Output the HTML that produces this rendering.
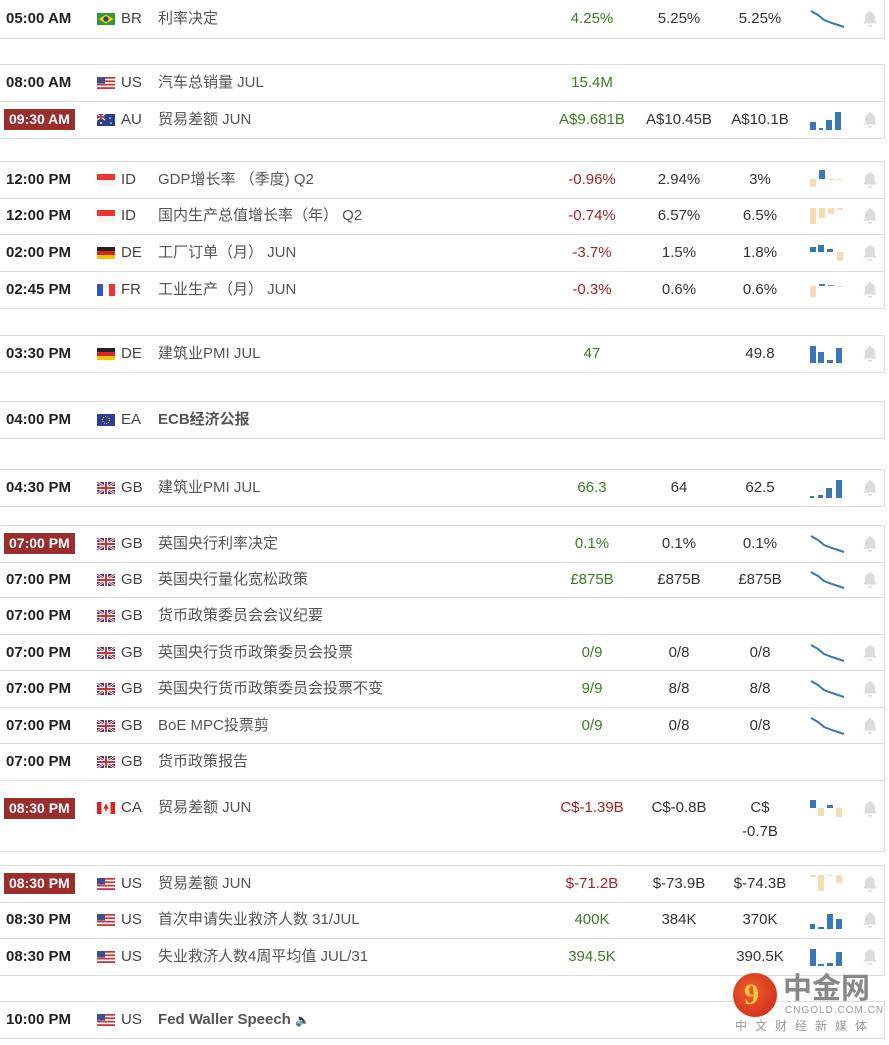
<!DOCTYPE html>
<html><head><meta charset="utf-8"><style>
body{margin:0;background:#fff;width:889px;height:1045px;position:relative;overflow:hidden;font-family:"Liberation Sans","Noto Sans CJK SC",sans-serif;font-size:15px;color:#333}
.r{position:absolute;left:0;width:884px;border-bottom:1px solid #ddd;border-right:1px solid #ddd}
.r>span{position:absolute;top:0;white-space:nowrap}
.r>svg{position:absolute}
.t{left:6px;font-weight:bold;color:#222}
.hl{left:4px;background:#9b2d2d;color:#fff;font-weight:bold;font-size:14px;padding:0 5px;height:21px;line-height:21px!important;top:50%!important;margin-top:-11px}
.fl{left:97px;top:50%;margin-top:-6px;width:18px;height:12px}
.cc{left:121px;color:#444}
.ev{left:158px;color:#555}
.a,.f,.p{width:90px;text-align:center}
.a{left:547px}.f{left:634px}.p{left:715px}
.g{color:#3b7d22}.red{color:#a32424}
.ch{left:810px;top:50%;margin-top:-10px}
.bl{left:861px;top:50%;margin-top:-9px}
.top{border-top:1px solid #ddd}
</style></head><body>
<svg width="0" height="0" style="position:absolute"><defs>
<symbol id="bell" viewBox="0 0 18 18"><path d="M9 1a1.5 1.5 0 0 1 1.5 1.5c2.5.7 3.5 2.8 3.5 5.5v3l2 2.5H2L4 11V8c0-2.7 1-4.8 3.5-5.5A1.5 1.5 0 0 1 9 1zM7 15h4a2 2 0 0 1-4 0z" fill="#dcdcdc"/></symbol>
<symbol id="us" viewBox="0 0 18 12"><rect width="18" height="12" fill="#fff"/><g fill="#c33"><rect y="0" width="18" height="1.7"/><rect y="3.4" width="18" height="1.7"/><rect y="6.8" width="18" height="1.7"/><rect y="10.2" width="18" height="1.8"/></g><rect width="8" height="6.5" fill="#3c4f8f"/></symbol>
<symbol id="gb" viewBox="0 0 18 12"><rect width="18" height="12" fill="#2b3e8a"/><path d="M0 0L18 12M18 0L0 12" stroke="#fff" stroke-width="2.5"/><path d="M0 0L18 12M18 0L0 12" stroke="#c33" stroke-width="1"/><path d="M9 0V12M0 6H18" stroke="#fff" stroke-width="4"/><path d="M9 0V12M0 6H18" stroke="#c33" stroke-width="2"/></symbol>
<symbol id="de" viewBox="0 0 18 12"><rect width="18" height="4" fill="#222"/><rect y="4" width="18" height="4" fill="#d22"/><rect y="8" width="18" height="4" fill="#f5c400"/></symbol>
<symbol id="id" viewBox="0 0 18 12"><rect width="18" height="6" fill="#e33"/><rect y="6" width="18" height="6" fill="#f4f4f4"/></symbol>
<symbol id="fr" viewBox="0 0 18 12"><rect width="6" height="12" fill="#3355bb"/><rect x="6" width="6" height="12" fill="#f4f4f4"/><rect x="12" width="6" height="12" fill="#e33"/></symbol>
<symbol id="br" viewBox="0 0 18 12"><rect width="18" height="12" fill="#2a9a3a"/><path d="M9 1.5L16.5 6L9 10.5L1.5 6Z" fill="#f5d000"/><circle cx="9" cy="6" r="2.6" fill="#2b3e8a"/></symbol>
<symbol id="au" viewBox="0 0 18 12"><rect width="18" height="12" fill="#2b3e8a"/><path d="M0 0L8 6M8 0L0 6" stroke="#fff" stroke-width="1.2"/><path d="M4 0V6M0 3H8" stroke="#c33" stroke-width="1.5"/><circle cx="13" cy="4" r=".8" fill="#fff"/><circle cx="14" cy="9" r=".8" fill="#fff"/><circle cx="4" cy="9" r="1" fill="#fff"/></symbol>
<symbol id="ca" viewBox="0 0 18 12"><rect width="18" height="12" fill="#fff"/><rect width="4.5" height="12" fill="#d22"/><rect x="13.5" width="4.5" height="12" fill="#d22"/><path d="M9 3l1.5 3h-3zM9 5v4" stroke="#d22" stroke-width="1.5" fill="#d22"/></symbol>
<symbol id="eu" viewBox="0 0 18 12"><rect width="18" height="12" fill="#2b3e9a"/><circle cx="9" cy="6" r="3.5" fill="none" stroke="#f5d000" stroke-width="1" stroke-dasharray="1 1.2"/></symbol>
<symbol id="ldown" viewBox="0 0 36 20"><polyline points="1,2 8,6 14,11 22,14 34,18" fill="none" stroke="#3a78b5" stroke-width="2"/></symbol>
</defs></svg>

<div class="r" style="top:0;height:38px;line-height:38px">
<span class="t">05:00 AM</span><svg class="fl"><use href="#br"/></svg><span class="cc">BR</span><span class="ev">利率决定</span>
<span class="a g">4.25%</span><span class="f">5.25%</span><span class="p">5.25%</span>
<svg class="ch" width="36" height="20"><use href="#ldown"/></svg><svg class="bl" width="18" height="18"><use href="#bell"/></svg></div>

<div class="r top" style="top:64px;height:36px;line-height:36px">
<span class="t">08:00 AM</span><svg class="fl"><use href="#us"/></svg><span class="cc">US</span><span class="ev">汽车总销量 JUL</span>
<span class="a g">15.4M</span></div>
<div class="r" style="top:101px;height:37px;line-height:37px">
<span class="t hl">09:30 AM</span><svg class="fl"><use href="#au"/></svg><span class="cc">AU</span><span class="ev">贸易差额 JUN</span>
<span class="a g">A$9.681B</span><span class="f">A$10.45B</span><span class="p">A$10.1B</span>
<svg class="ch" width="36" height="20"><rect x="0" y="12" width="6" height="8" fill="#3a78b5"/><rect x="9" y="18" width="4" height="2" fill="#3a78b5"/><rect x="16" y="10" width="6" height="10" fill="#3a78b5"/><rect x="25" y="2" width="6" height="18" fill="#3a78b5"/></svg><svg class="bl" width="18" height="18"><use href="#bell"/></svg></div>

<div class="r top" style="top:161px;height:36px;line-height:36px">
<span class="t">12:00 PM</span><svg class="fl"><use href="#id"/></svg><span class="cc">ID</span><span class="ev">GDP增长率 （季度) Q2</span>
<span class="a red">-0.96%</span><span class="f">2.94%</span><span class="p">3%</span>
<svg class="ch" width="36" height="20"><rect x="0" y="9" width="6" height="8" fill="#f5deb3"/><rect x="9" y="0" width="6" height="9" fill="#3a78b5"/><rect x="18" y="9" width="6" height="1" fill="#f5deb3"/><rect x="27" y="9" width="6" height="1" fill="#f5deb3"/></svg><svg class="bl" width="18" height="18"><use href="#bell"/></svg></div>
<div class="r" style="top:198px;height:36px;line-height:36px">
<span class="t">12:00 PM</span><svg class="fl"><use href="#id"/></svg><span class="cc">ID</span><span class="ev">国内生产总值增长率（年） Q2</span>
<span class="a red">-0.74%</span><span class="f">6.57%</span><span class="p">6.5%</span>
<svg class="ch" width="36" height="20"><rect x="0" y="2" width="6" height="16" fill="#f5deb3"/><rect x="9" y="2" width="6" height="10" fill="#f5deb3"/><rect x="18" y="2" width="6" height="6" fill="#f5deb3"/><rect x="27" y="2" width="6" height="2" fill="#f5deb3"/></svg><svg class="bl" width="18" height="18"><use href="#bell"/></svg></div>
<div class="r" style="top:235px;height:36px;line-height:36px">
<span class="t">02:00 PM</span><svg class="fl"><use href="#de"/></svg><span class="cc">DE</span><span class="ev">工厂订单（月） JUN</span>
<span class="a red">-3.7%</span><span class="f">1.5%</span><span class="p">1.8%</span>
<svg class="ch" width="36" height="20"><rect x="0" y="4" width="6" height="5" fill="#3a78b5"/><rect x="8" y="2" width="6" height="7" fill="#3a78b5"/><rect x="17" y="6" width="6" height="3" fill="#3a78b5"/><rect x="27" y="9" width="6" height="9" fill="#f5deb3"/></svg><svg class="bl" width="18" height="18"><use href="#bell"/></svg></div>
<div class="r" style="top:272px;height:36px;line-height:36px">
<span class="t">02:45 PM</span><svg class="fl"><use href="#fr"/></svg><span class="cc">FR</span><span class="ev">工业生产（月） JUN</span>
<span class="a red">-0.3%</span><span class="f">0.6%</span><span class="p">0.6%</span>
<svg class="ch" width="36" height="20"><rect x="0" y="6" width="6" height="11" fill="#f5deb3"/><rect x="9" y="4" width="6" height="2" fill="#3a78b5"/><rect x="18" y="5" width="6" height="1" fill="#6a98c8"/><rect x="27" y="6" width="6" height="1" fill="#f5deb3"/></svg><svg class="bl" width="18" height="18"><use href="#bell"/></svg></div>

<div class="r top" style="top:335px;height:36px;line-height:36px">
<span class="t">03:30 PM</span><svg class="fl"><use href="#de"/></svg><span class="cc">DE</span><span class="ev">建筑业PMI JUL</span>
<span class="a g">47</span><span class="p">49.8</span>
<svg class="ch" width="36" height="20"><rect x="0" y="2" width="6" height="17" fill="#3a78b5"/><rect x="8" y="8" width="6" height="11" fill="#3a78b5"/><rect x="17" y="16" width="6" height="3" fill="#3a78b5"/><rect x="26" y="4" width="6" height="15" fill="#3a78b5"/></svg><svg class="bl" width="18" height="18"><use href="#bell"/></svg></div>

<div class="r top" style="top:401px;height:36px;line-height:36px">
<span class="t">04:00 PM</span><svg class="fl"><use href="#eu"/></svg><span class="cc">EA</span><span class="ev" style="font-weight:bold">ECB经济公报</span></div>

<div class="r top" style="top:469px;height:36px;line-height:36px">
<span class="t">04:30 PM</span><svg class="fl"><use href="#gb"/></svg><span class="cc">GB</span><span class="ev">建筑业PMI JUL</span>
<span class="a g">66.3</span><span class="f">64</span><span class="p">62.5</span>
<svg class="ch" width="36" height="20"><rect x="0" y="18" width="4" height="2" fill="#3a78b5"/><rect x="8" y="17" width="5" height="3" fill="#3a78b5"/><rect x="16" y="10" width="6" height="10" fill="#3a78b5"/><rect x="26" y="2" width="6" height="18" fill="#3a78b5"/></svg><svg class="bl" width="18" height="18"><use href="#bell"/></svg></div>

<div class="r top" style="top:525px;height:36px;line-height:36px">
<span class="t hl">07:00 PM</span><svg class="fl"><use href="#gb"/></svg><span class="cc">GB</span><span class="ev">英国央行利率决定</span>
<span class="a g">0.1%</span><span class="f">0.1%</span><span class="p">0.1%</span>
<svg class="ch" width="36" height="20"><use href="#ldown"/></svg><svg class="bl" width="18" height="18"><use href="#bell"/></svg></div>
<div class="r" style="top:562px;height:35px;line-height:35px">
<span class="t">07:00 PM</span><svg class="fl"><use href="#gb"/></svg><span class="cc">GB</span><span class="ev">英国央行量化宽松政策</span>
<span class="a g">£875B</span><span class="f">£875B</span><span class="p">£875B</span>
<svg class="ch" width="36" height="20"><use href="#ldown"/></svg><svg class="bl" width="18" height="18"><use href="#bell"/></svg></div>
<div class="r" style="top:598px;height:36px;line-height:36px">
<span class="t">07:00 PM</span><svg class="fl"><use href="#gb"/></svg><span class="cc">GB</span><span class="ev">货币政策委员会会议纪要</span></div>
<div class="r" style="top:635px;height:35px;line-height:35px">
<span class="t">07:00 PM</span><svg class="fl"><use href="#gb"/></svg><span class="cc">GB</span><span class="ev">英国央行货币政策委员会投票</span>
<span class="a g">0/9</span><span class="f">0/8</span><span class="p">0/8</span>
<svg class="ch" width="36" height="20"><use href="#ldown"/></svg><svg class="bl" width="18" height="18"><use href="#bell"/></svg></div>
<div class="r" style="top:671px;height:36px;line-height:36px">
<span class="t">07:00 PM</span><svg class="fl"><use href="#gb"/></svg><span class="cc">GB</span><span class="ev">英国央行货币政策委员会投票不变</span>
<span class="a g">9/9</span><span class="f">8/8</span><span class="p">8/8</span>
<svg class="ch" width="36" height="20"><use href="#ldown"/></svg><svg class="bl" width="18" height="18"><use href="#bell"/></svg></div>
<div class="r" style="top:708px;height:35px;line-height:35px">
<span class="t">07:00 PM</span><svg class="fl"><use href="#gb"/></svg><span class="cc">GB</span><span class="ev">BoE MPC投票剪</span>
<span class="a g">0/9</span><span class="f">0/8</span><span class="p">0/8</span>
<svg class="ch" width="36" height="20"><use href="#ldown"/></svg><svg class="bl" width="18" height="18"><use href="#bell"/></svg></div>
<div class="r" style="top:744px;height:36px;line-height:36px">
<span class="t">07:00 PM</span><svg class="fl"><use href="#gb"/></svg><span class="cc">GB</span><span class="ev">货币政策报告</span></div>

<div class="r" style="top:781px;height:70px;line-height:24px">
<span class="t hl" style="top:17px!important;margin-top:0">08:30 PM</span><svg class="fl" style="top:21px;margin-top:0"><use href="#ca"/></svg>
<span class="cc" style="top:15px">CA</span><span class="ev" style="top:15px">贸易差额 JUN</span>
<span class="a red" style="top:15px">C$-1.39B</span><span class="f" style="top:15px">C$-0.8B</span><span class="p" style="top:15px">C$<br>-0.7B</span>
<svg class="ch" width="36" height="20" style="top:19px;margin-top:0"><rect x="0" y="0" width="6" height="8" fill="#3a78b5"/><rect x="8" y="8" width="6" height="8" fill="#f5deb3"/><rect x="17" y="5" width="6" height="3" fill="#3a78b5"/><rect x="26" y="8" width="6" height="9" fill="#f5deb3"/></svg><svg class="bl" width="18" height="18" style="top:19px;margin-top:0"><use href="#bell"/></svg></div>

<div class="r top" style="top:865px;height:36px;line-height:36px">
<span class="t hl">08:30 PM</span><svg class="fl"><use href="#us"/></svg><span class="cc">US</span><span class="ev">贸易差额 JUN</span>
<span class="a red">$-71.2B</span><span class="f">$-73.9B</span><span class="p">$-74.3B</span>
<svg class="ch" width="36" height="20"><rect x="0" y="1" width="6" height="2" fill="#f5deb3"/><rect x="8" y="1" width="6" height="16" fill="#f5deb3"/><rect x="17" y="1" width="6" height="1" fill="#f5deb3"/><rect x="26" y="1" width="6" height="8" fill="#f5deb3"/></svg><svg class="bl" width="18" height="18"><use href="#bell"/></svg></div>
<div class="r" style="top:902px;height:36px;line-height:36px">
<span class="t">08:30 PM</span><svg class="fl"><use href="#us"/></svg><span class="cc">US</span><span class="ev">首次申请失业救济人数 31/JUL</span>
<span class="a g">400K</span><span class="f">384K</span><span class="p">370K</span>
<svg class="ch" width="36" height="20"><rect x="0" y="14" width="5" height="5" fill="#3a78b5"/><rect x="8" y="17" width="6" height="2" fill="#3a78b5"/><rect x="17" y="4" width="6" height="15" fill="#3a78b5"/><rect x="26" y="9" width="6" height="10" fill="#3a78b5"/></svg><svg class="bl" width="18" height="18"><use href="#bell"/></svg></div>
<div class="r" style="top:939px;height:36px;line-height:36px">
<span class="t">08:30 PM</span><svg class="fl"><use href="#us"/></svg><span class="cc">US</span><span class="ev">失业救济人数4周平均值 JUL/31</span>
<span class="a g">394.5K</span><span class="p">390.5K</span>
<svg class="ch" width="36" height="20"><rect x="0" y="2" width="6" height="17" fill="#3a78b5"/><rect x="8" y="17" width="6" height="2" fill="#3a78b5"/><rect x="17" y="16" width="6" height="3" fill="#3a78b5"/><rect x="26" y="5" width="6" height="14" fill="#3a78b5"/></svg><svg class="bl" width="18" height="18"><use href="#bell"/></svg></div>

<div class="r top" style="top:1001px;height:36px;line-height:36px">
<span class="t">10:00 PM</span><svg class="fl"><use href="#us"/></svg><span class="cc">US</span><span class="ev" style="font-weight:bold">Fed Waller Speech <span style="font-size:12px">🔈</span></span></div>

<div style="position:absolute;left:733px;top:973px;width:44px;height:44px;border-radius:50%;background:radial-gradient(circle at 40% 40%,#f25a2a,#c8261a)"></div>
<div style="position:absolute;left:744px;top:978px;font-size:30px;font-weight:bold;color:#f7c840;font-family:'Liberation Serif',serif">9</div>
<div style="position:absolute;left:783px;top:972px;font-size:29px;line-height:34px;font-weight:bold;color:#888">中金网</div>
<div style="position:absolute;left:785px;top:1005px;font-size:10px;line-height:12px;color:#999;letter-spacing:1px">CNGOLD.COM.CN</div>
<div style="position:absolute;left:735px;top:1019px;font-size:12px;line-height:14px;color:#999;letter-spacing:8px">中文财经新媒体</div>
</body></html>
